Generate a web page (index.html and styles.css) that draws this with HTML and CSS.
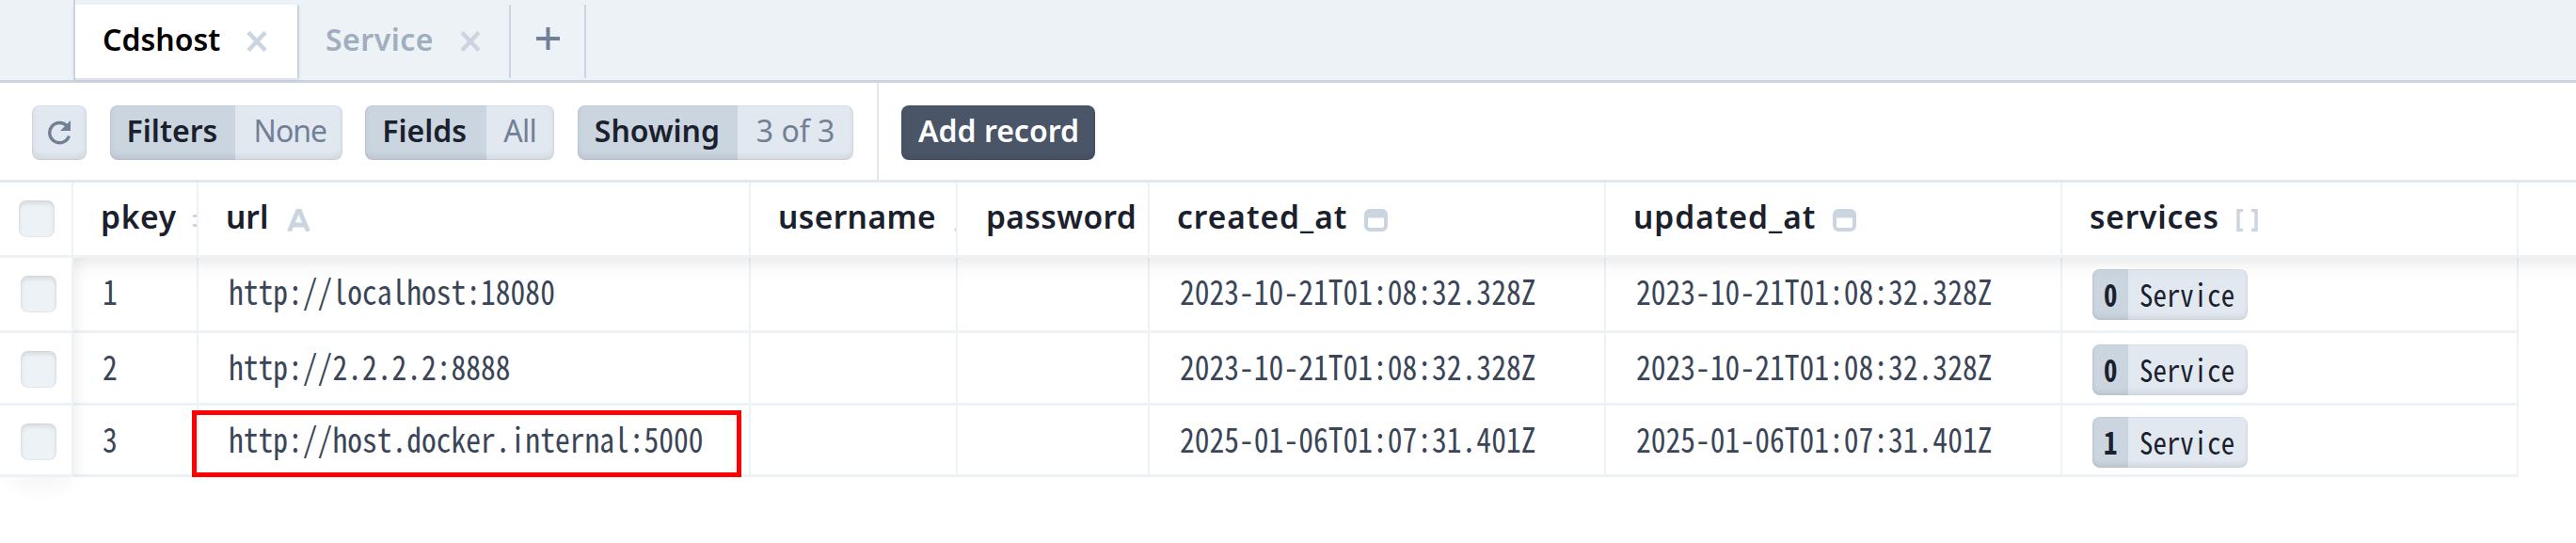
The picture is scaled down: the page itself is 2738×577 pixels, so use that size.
FILE: index.html
```
<!DOCTYPE html>
<html lang="en">
<head>
<meta charset="utf-8">
<title>Cdshost</title>
<link rel="stylesheet" href="styles.css">
</head>
<body>
<div class="app">
  <nav class="tabs">
    <div class="tab tab-active"><span class="t">Cdshost</span><svg class="close" viewBox="0 0 24 22"><path d="M3 1.5L21 20.5M21 1.5L3 20.5"/></svg></div>
    <div class="tab tab-idle"><span class="t">Service</span><svg class="close" viewBox="0 0 24 22"><path d="M3 1.5L21 20.5M21 1.5L3 20.5"/></svg></div>
    <div class="tab tab-add"><svg class="plus" viewBox="0 0 25 24"><path d="M12.5 0V24M0 12H25"/></svg></div>
  </nav>
  <div class="toolbar">
    <div class="filters">
      <button class="btn refresh"><svg viewBox="0 0 26 26"><path class="arc" d="M21.4 6.2A10.6 10.6 0 1 0 23.4 16.5"/><path class="tip" d="M25 0V11H14z"/></svg></button>
      <button class="btn b-filters"><b class="key">Filters</b><span class="val">None</span></button>
      <button class="btn b-fields"><b class="key">Fields</b><span class="val">All</span></button>
      <button class="btn b-showing"><b class="key">Showing</b><span class="val">3 of 3</span></button>
    </div>
    <button class="btn add">Add record</button>
  </div>
  <main class="grid">
    <div class="row head">
      <div class="cell pick"><i class="box"></i></div>
      <div class="cell c-pkey"><span class="t">pkey</span><svg class="type" viewBox="0 0 25 24"><path d="M0 7.5H25M0 17.5H25"/></svg></div>
      <div class="cell c-url"><span class="t">url</span><svg class="type" viewBox="0 0 25 24"><path d="M2.4 24L12 1H13L22.6 24M6 17H19"/></svg></div>
      <div class="cell c-user"><span class="t">username</span><svg class="type" viewBox="0 0 25 24"><path d="M2.4 24L12 1H13L22.6 24M6 17H19"/></svg></div>
      <div class="cell c-pass"><span class="t">password</span></div>
      <div class="cell c-date"><span class="t">created_at</span><svg class="type cal" viewBox="0 0 25 24"><path fill-rule="evenodd" d="M6 0H19A6 6 0 0 1 25 6V18A6 6 0 0 1 19 24H6A6 6 0 0 1 0 18V6A6 6 0 0 1 6 0ZM4 9.5V18Q4 20 6 20H19Q21 20 21 18V9.5Z"/></svg></div>
      <div class="cell c-date"><span class="t">updated_at</span><svg class="type cal" viewBox="0 0 25 24"><path fill-rule="evenodd" d="M6 0H19A6 6 0 0 1 25 6V18A6 6 0 0 1 19 24H6A6 6 0 0 1 0 18V6A6 6 0 0 1 6 0ZM4 9.5V18Q4 20 6 20H19Q21 20 21 18V9.5Z"/></svg></div>
      <div class="cell c-serv"><span class="t">services</span><svg class="type br" viewBox="0 0 25 24"><path d="M8 1.5H3V22.5H8M17 1.5H22V22.5H17"/></svg></div>
    </div>
    <div class="row r1">
      <div class="cell pick"><i class="box"></i></div><div class="cell"><span class="mono">1</span></div><div class="cell"><span class="mono">http://localhost:18080</span></div><div class="cell"></div><div class="cell"></div><div class="cell"><span class="mono">2023-10-21T01:08:32.328Z</span></div><div class="cell"><span class="mono">2023-10-21T01:08:32.328Z</span></div>
      <div class="cell"><span class="pill"><b><span class="mono">0</span></b><span class="mono">Service</span></span></div>
    </div>
    <div class="row r2">
      <div class="cell pick"><i class="box"></i></div><div class="cell"><span class="mono">2</span></div><div class="cell"><span class="mono">http://2.2.2.2:8888</span></div><div class="cell"></div><div class="cell"></div><div class="cell"><span class="mono">2023-10-21T01:08:32.328Z</span></div><div class="cell"><span class="mono">2023-10-21T01:08:32.328Z</span></div>
      <div class="cell"><span class="pill"><b><span class="mono">0</span></b><span class="mono">Service</span></span></div>
    </div>
    <div class="row r3">
      <div class="cell pick"><i class="box"></i></div><div class="cell"><span class="mono">3</span></div><div class="cell marked"><span class="mono">http://host.docker.internal:5000</span></div><div class="cell"></div><div class="cell"></div><div class="cell"><span class="mono">2025-01-06T01:07:31.401Z</span></div><div class="cell"><span class="mono">2025-01-06T01:07:31.401Z</span></div>
      <div class="cell"><span class="pill"><b><span class="mono">1</span></b><span class="mono">Service</span></span></div>
    </div>
    <div class="shade-top"></div>
    <div class="shade-side"></div>
    <div class="shade-foot"></div>
  </main>
</div>
</body>
</html>
```
FILE: styles.css
```
*, *::before, *::after { box-sizing: border-box; }
body { margin: 0; background: #fff; color: #1a202c; font: 32px/40px "Noto Sans", sans-serif; }
.app { width: 2738px; height: 577px; overflow: hidden; }
.t { white-space: nowrap; flex: none; }

/* Tabs */
.tabs { display: flex; height: 88px; padding: 5px 0 0 78px; background: linear-gradient(90deg, #cbd5e0, #cbd5e0) 78px 0 / 2px 100% no-repeat #edf2f7; border-bottom: 3px solid #cbd5e0; }
.tab { display: flex; align-items: center; height: 78px; border-right: 2px solid #cbd5e0; font-weight: 600; }
.tab .t { margin-top: -4px; }
.tab svg { flex: none; }
.tab-active { width: 240px; padding-left: 29px; border-left: 2px solid #cbd5e0; background: #fff; color: #000; box-shadow: 0 2px 3px rgba(0,0,0,.08); }
.tab-idle { width: 225px; padding-left: 28px; color: #a0aec0; letter-spacing: .5px; }
.tab-add { width: 80px; justify-content: center; }
.close { width: 24px; height: 22px; margin: -1px 0 0 27px; fill: none; stroke: #cbd5e0; stroke-width: 4.5; }
.plus { width: 25px; height: 24px; margin-top: -6px; fill: none; stroke: #718096; stroke-width: 4; }

/* Toolbar */
.toolbar { display: flex; height: 106px; border-bottom: 3px solid #e2e8f0; }
.filters { display: flex; gap: 24.6px; width: 934px; padding: 24px 0 0 34px; border-right: 2px solid #e2e8f0; }
.btn { display: flex; position: relative; flex: none; height: 58px; padding: 0; border: 0; border-radius: 8px; overflow: hidden; background: #e2e8f0; font: inherit; line-height: 53px; text-align: left; white-space: nowrap; }
.btn::after { content: ""; position: absolute; inset: 0; border-radius: 8px; box-shadow: inset 0 -4px 6px rgba(0,0,0,.08), inset 0 0 0 1px rgba(0,0,0,.04); }
.key { background: #cbd5e0; color: #1a202c; font-weight: 600; padding-left: 18px; }
.val { color: #718096; padding-left: 20px; }
.refresh { width: 58px; padding: 16px; }
.refresh svg { width: 26px; height: 26px; }
.arc { fill: none; stroke: #718096; stroke-width: 3.4; }
.tip { fill: #718096; }
.b-filters { width: 247px; } .b-filters .key { width: 133px; } .b-filters .val { letter-spacing: -1px; }
.b-fields { width: 201px; } .b-fields .key { width: 129px; } .b-fields .val { padding-left: 18px; letter-spacing: -.7px; }
.b-showing { width: 293px; } .b-showing .key { width: 170px; }
.add { width: 206px; margin: 24px 0 0 24px; padding-left: 18px; background: #4a5568; color: #fff; font-weight: 600; }

/* Records */
.grid { position: relative; }
.row { display: grid; grid-template-columns: 78px 133px 587px 220px 204px 485px 485px 485px; width: 2677px; border-bottom: 3px solid #edf2f7; }
.cell { display: flex; align-items: flex-start; overflow: hidden; padding-left: 32px; border-right: 2px solid #edf2f7; }
.row.head { height: 80px; width: 100%; font-size: 33.5px; font-weight: 600; }
.head .cell { padding-left: 29px; line-height: 73px; }
.r1 { height: 80px; } .r2 { height: 77px; } .r3 { height: 76px; }
.mono { display: inline-block; font-family: "Noto Sans CJK JP", sans-serif; font-feature-settings: "hwid"; font-size: 36px; line-height: 69px; color: #3a4558; white-space: nowrap; transform: scaleX(.876); transform-origin: 0 0; }
.cell:nth-child(2) .mono { margin-left: -1px; }
.cell.pick { padding-left: 22px; }
.head .pick { padding-left: 20px; }
.box { width: 38px; height: 39px; margin-top: 19px; border-radius: 8px; background: #edf2f7; box-shadow: inset 0 3px 5px rgba(0,0,0,.1), inset 0 0 0 1px rgba(0,0,0,.03); }
.type { flex: none; width: 25px; height: 24px; margin: 28px 0 0; fill: none; stroke: #cbd5e0; stroke-width: 4.8; }
.type.cal { fill: #cbd5e0; stroke: none; }
.type.br { stroke-width: 3.5; }
.c-pkey .t { width: 98px; letter-spacing: .7px; } .c-pkey .type { stroke-width: 3; }
.c-url .t { width: 65px; }
.c-user .t { width: 187px; letter-spacing: .4px; }
.c-pass .t { margin-left: 1px; letter-spacing: .4px; }
.c-date .t { width: 212px; letter-spacing: 1px; }
.c-date:nth-child(6) .t { width: 199px; }
.c-serv .t { width: 155px; letter-spacing: .8px; }

/* Outlined cell */
.marked { position: relative; overflow: visible; }
.marked::after { content: ""; position: absolute; left: -7px; top: 5px; width: 584px; height: 71px; border: 5px solid #f00; }

.shade-top { position: absolute; left: 78px; right: 0; top: 80px; height: 24px; background: linear-gradient(rgba(0,0,0,.065), rgba(0,0,0,.02) 50%, transparent); }
.shade-side { position: absolute; left: 78px; top: 80px; width: 18px; height: 233px; background: linear-gradient(90deg, rgba(0,0,0,.045), rgba(0,0,0,.012) 55%, transparent); }
.shade-foot { position: absolute; left: 0; top: 313px; width: 88px; height: 26px; background: radial-gradient(ellipse 55% 100% at 50% 0, rgba(0,0,0,.035), rgba(0,0,0,.015) 60%, transparent); }

.pill { display: flex; position: relative; width: 165px; height: 54px; margin-top: 12px; border-radius: 8px; background: #e2e8f0; overflow: hidden; }
.pill::after { content: ""; position: absolute; inset: 0; border-radius: 8px; box-shadow: inset 0 -4px 5px rgba(0,0,0,.07), inset 0 0 0 1px rgba(0,0,0,.03); }
.pill b { width: 39px; padding-left: 12px; margin-right: 12px; background: #cbd5e0; }
.pill .mono { font-size: 33px; line-height: 52px; color: #1a202c; }
```
